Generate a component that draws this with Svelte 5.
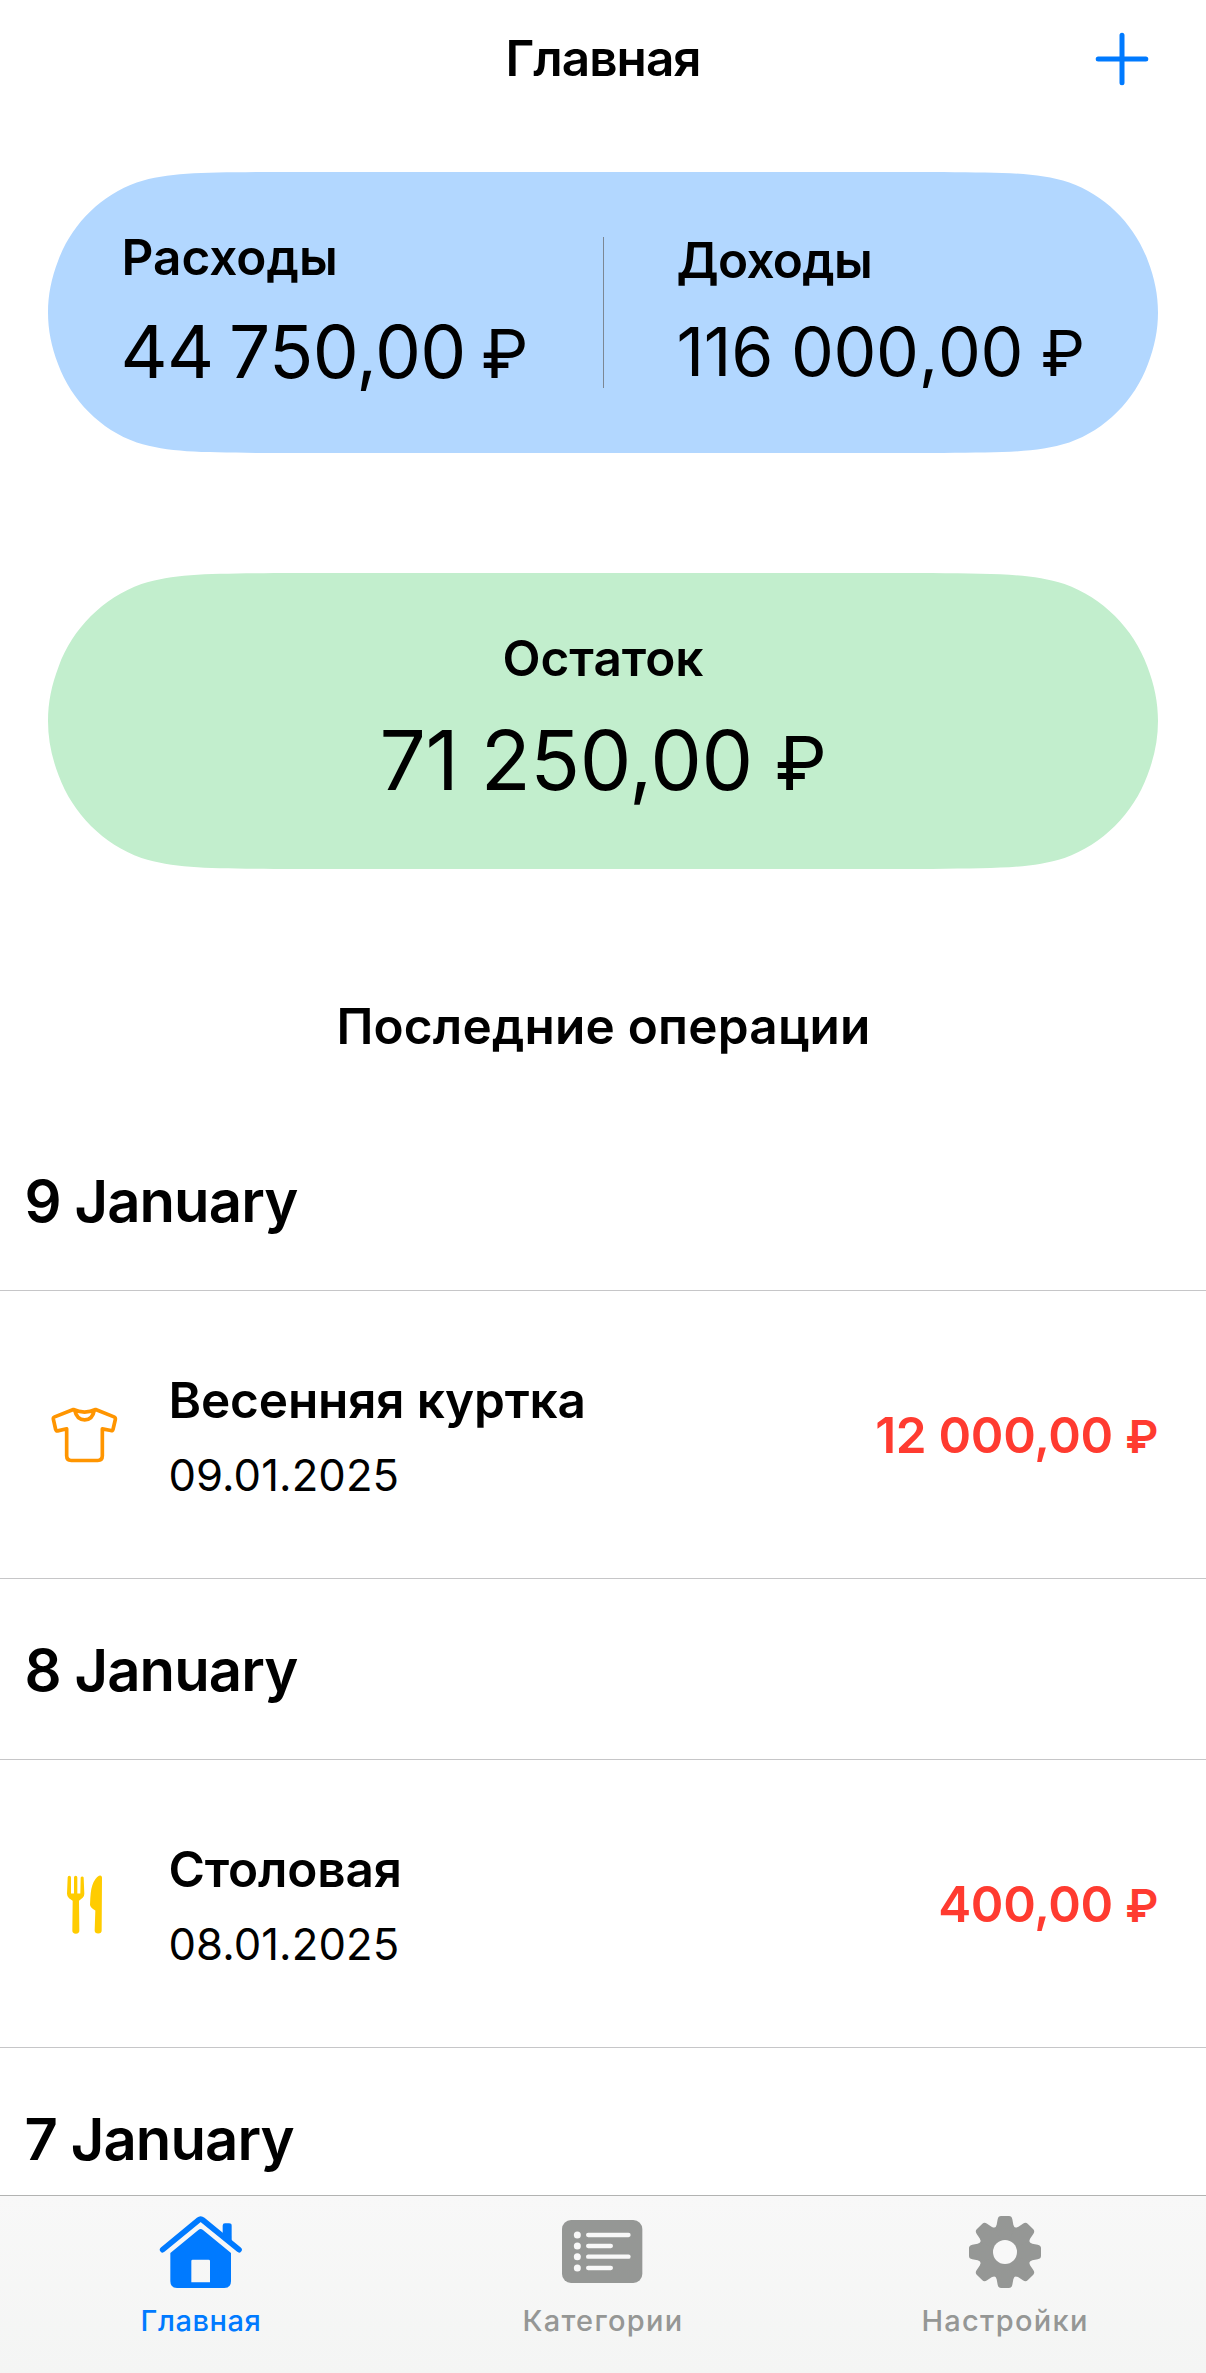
<script>
  const groups = [
    { day: '9 January', items: [{ name: 'Весенняя куртка', date: '09.01.2025', amount: '12 000,00', icon: 'shirt' }] },
    { day: '8 January', items: [{ name: 'Столовая', date: '08.01.2025', amount: '400,00', icon: 'cutlery' }] },
    { day: '7 January', items: [] }
  ];

  const tabs = [
    { label: 'Главная', icon: 'house', active: true },
    { label: 'Категории', icon: 'list', active: false },
    { label: 'Настройки', icon: 'gear', active: false }
  ];

  const teeth = [0, 45, 90, 135, 180, 225, 270, 315];

  // Continuous-curvature capsule outline for a w × h box.
  function capsule(w, h) {
    const r = h / 2;
    const curve = [
      [1.0885, 0.006, 0.8684, 0.001, 0.6315, 0.0745],
      [0.3728, 0.1675, 0.1675, 0.3728, 0.072, 0.6315],
      [0.024, 0.757, 0, 0.875, 0, 1]
    ];
    const pt = (x, y, fx, fy) => `${fx ? w - x * r : x * r} ${fy ? h - y * r : y * r}`;
    const forward = (fx, fy) =>
      curve.map((c) => `C${pt(c[0], c[1], fx, fy)} ${pt(c[2], c[3], fx, fy)} ${pt(c[4], c[5], fx, fy)}`).join('');
    const backward = (fx, fy) => {
      const ends = [[1.5287, 0], [0.6315, 0.0745], [0.072, 0.6315]];
      return [2, 1, 0]
        .map((i) => {
          const c = curve[i];
          return `C${pt(c[2], c[3], fx, fy)} ${pt(c[0], c[1], fx, fy)} ${pt(ends[i][0], ends[i][1], fx, fy)}`;
        })
        .join('');
    };
    return `path('M${pt(1.5287, 0)}${forward(false, false)}${backward(false, true)}L${pt(1.5287, 0, true, true)}${forward(true, true)}${backward(true, false)}Z')`;
  }
</script>

{#snippet money(value)}{value}&nbsp;<span class="rub">₽</span>{/snippet}

<div class="screen">
  <header>
    <span></span>
    <h1>Главная</h1>
    <button class="add" aria-label="Добавить">
      <svg width="54" height="54" viewBox="0 0 54 54"><path d="M27 3.2v47.6M3.2 27h47.6" /></svg>
    </button>
  </header>

  <section class="card flows" style:clip-path={capsule(1110, 281)}>
    <div class="flow expense">
      <h2>Расходы</h2>
      <p>{@render money('44 750,00')}</p>
    </div>
    <div class="divider"></div>
    <div class="flow income">
      <h2>Доходы</h2>
      <p>{@render money('116 000,00')}</p>
    </div>
  </section>

  <section class="card balance" style:clip-path={capsule(1110, 296)}>
    <h2>Остаток</h2>
    <p>{@render money('71 250,00')}</p>
  </section>

  <h2 class="recent">Последние операции</h2>

  <main>
    {#each groups as group}
      <h3>{group.day}</h3>
      {#each group.items as item}
        <article>
          <svg class="glyph {item.icon}" viewBox={item.icon === 'shirt' ? '54 55.5 216 216' : '54 52.5 216 216'}>
            {#if item.icon === 'shirt'}
              <path d="M130 87L74 109Q69 111 70 116L77 147Q78 152 83 151L110 145V226Q110 240 124 240H203Q217 240 217 226V145L243 150Q248 152 249 147L256 117Q257 111 252 109L197 87Q164 103 130 87ZM134 89Q140 118 164 118Q188 118 193 89" />
            {:else}
              <path d="M113 81a5 5 0 0 1 10 0V129h9V81a5 5 0 0 1 10 0V129h9L152 81a5 5 0 0 1 9 0L163 130Q163 138 158 142L147 151L148 240a10 9 0 0 1-21 0L128 151L117 143Q111 138 111 130Z" />
              <path d="M216 81L215 240a10.500 9 0 0 1-21 0L196 180Q180 171 180 163Q181 121 187 104Q196 81 207 76Q215 73 216 81Z" />
            {/if}
          </svg>
          <div class="info">
            <h4>{item.name}</h4>
            <time>{item.date}</time>
          </div>
          <strong>{@render money(item.amount)}</strong>
        </article>
      {/each}
    {/each}
  </main>

  <nav>
    {#each tabs as tab}
      <a href="#{tab.icon}" class:active={tab.active} class={tab.icon}>
        {#if tab.icon === 'house'}
          <svg viewBox="93 78 300 270">
            <path class="roof" d="M128 209L236 120Q242 115 248 120L357 209" />
            <path d="M308 137Q308 130 315 130H327Q335 130 335 137V190L308 168Z" />
            <path fill-rule="evenodd" d="M151 219L235 150Q242 144 249 150L333 219V304Q333 324 313 324H171Q151 324 151 304ZM218 239Q214 239 214 243V307H270V243Q270 239 266 239Z" />
          </svg>
        {:else if tab.icon === 'list'}
          <svg viewBox="159 78 300 270">
            <rect x="186" y="120" width="241" height="189" rx="27" />
            <g class="cut">
              {#each [165, 198, 230, 264] as y, i}
                <circle cx="232" cy={y} r="10.500" />
                <rect x="258" y={y - 6.5} width={i % 2 ? 81 : 134} height="13" rx="6.500" />
              {/each}
            </g>
          </svg>
        {:else}
          <svg viewBox="165 78 300 270">
            <g transform="translate(315 216)">
              <circle r="77" />
              {#each teeth as angle}
                <path transform="rotate({angle})" d="M-32-72Q-27-75-25-82L-22-98Q-20-108-12-108H12Q20-108 22-98L25-82Q27-75 32-72L0 0Z" />
              {/each}
              <circle class="cut" r="36" />
            </g>
          </svg>
        {/if}
        <span>{tab.label}</span>
      </a>
    {/each}
  </nav>
</div>

<style>
  :global(body) { margin: 0; background: #fff; }
  .screen {
    display: flex;
    flex-direction: column;
    width: 1206px;
    height: 2373px;
    overflow: hidden;
    color: #000;
    background: #fff;
    font-family: Inter, 'Liberation Sans', sans-serif;
  }
  h1, h2, h3, h4, p { margin: 0; white-space: nowrap; }
  h1, h2, h4 { font-size: 49.5px; font-weight: 600; line-height: 60px; }
  .rub { font-size: 0.92em; line-height: 1; }
  header {
    display: grid;
    grid-template-columns: 1fr auto 1fr;
    align-items: center;
    flex: none;
    height: 116px;
    padding: 0 57px;
  }
  h1 { letter-spacing: -0.95px; }
  .add { display: flex; justify-self: end; padding: 1px 0 0; border: 0; background: none; }
  .add path { stroke: #007aff; stroke-width: 5; stroke-linecap: round; }
  .card { flex: none; box-sizing: border-box; width: 1110px; margin: 0 48px; }
  .flows {
    display: flex;
    align-items: center;
    height: 281px;
    margin-top: 56px;
    padding-left: 72.5px;
    background: #b2d7ff;
  }
  .flow { display: flex; flex-direction: column; }
  .expense { width: 482.5px; gap: 19px; padding-bottom: 1px; }
  .expense h2 { padding-left: 1px; }
  .expense p { font-size: 73px; line-height: 91px; letter-spacing: -0.6px; word-spacing: -4.6px; }
  .income { gap: 17.5px; padding-left: 72.5px; }
  .income h2 { letter-spacing: -0.7px; }
  .income p { font-size: 68px; line-height: 88px; letter-spacing: -0.3px; word-spacing: -1px; font-kerning: none; }
  .divider { width: 1px; height: 151px; background: #7c8794; }
  .balance {
    display: flex;
    flex-direction: column;
    align-items: center;
    gap: 23px;
    height: 296px;
    margin-top: 120px;
    padding-top: 55px;
    background: #c2eecd;
  }
  .balance p { font-size: 82px; line-height: 100px; letter-spacing: -0.4px; word-spacing: -0.5px; }
  .balance .rub { font-size: 0.9em; }
  .recent { flex: none; padding: 127px 0 54px 1px; text-align: center; letter-spacing: 0.2px; }
  main { flex: 1; min-height: 0; overflow: hidden; }
  h3 {
    box-sizing: border-box;
    height: 180px;
    padding: 2px 0 0 24.5px;
    font-size: 58px;
    font-weight: 600;
    line-height: 178px;
    letter-spacing: -0.9px;
  }
  article {
    display: flex;
    align-items: center;
    height: 287px;
    padding: 0 48px;
    border-top: 1px solid #c6c6c8;
    border-bottom: 1px solid #c6c6c8;
  }
  .glyph { flex: none; width: 72px; height: 72px; margin-right: 48.5px; }
  .shirt path { fill: none; stroke: #ff9500; stroke-width: 11; stroke-linejoin: round; }
  .cutlery path { fill: #ffcc00; }
  .info { display: flex; flex: 1; flex-direction: column; gap: 18px; padding-top: 5px; }
  h4 { letter-spacing: -0.15px; }
  time { font-size: 43.6px; line-height: 56px; letter-spacing: 0.08px; }
  strong { color: #ff3b30; font-size: 49.5px; font-weight: 600; line-height: 60px; letter-spacing: -0.3px; }
  nav {
    display: grid;
    grid-template-columns: repeat(3, 1fr);
    flex: none;
    box-sizing: border-box;
    height: 178px;
    padding-top: 10px;
    border-top: 1px solid #b2b3b2;
    background: linear-gradient(#f8f8f8, #f4f5f4);
  }
  nav a {
    display: flex;
    flex-direction: column;
    align-items: center;
    gap: 5px;
    color: #959795;
    text-decoration: none;
    font-size: 29px;
    font-weight: 500;
    line-height: 40px;
    letter-spacing: 1.3px;
  }
  nav a.active { color: #007aff; letter-spacing: 0.56px; }
  nav svg { width: 100px; height: 90px; fill: currentColor; }
  .roof { fill: none; stroke: currentColor; stroke-width: 17; stroke-linecap: round; }
  .cut { fill: #f8f8f8; }
</style>
